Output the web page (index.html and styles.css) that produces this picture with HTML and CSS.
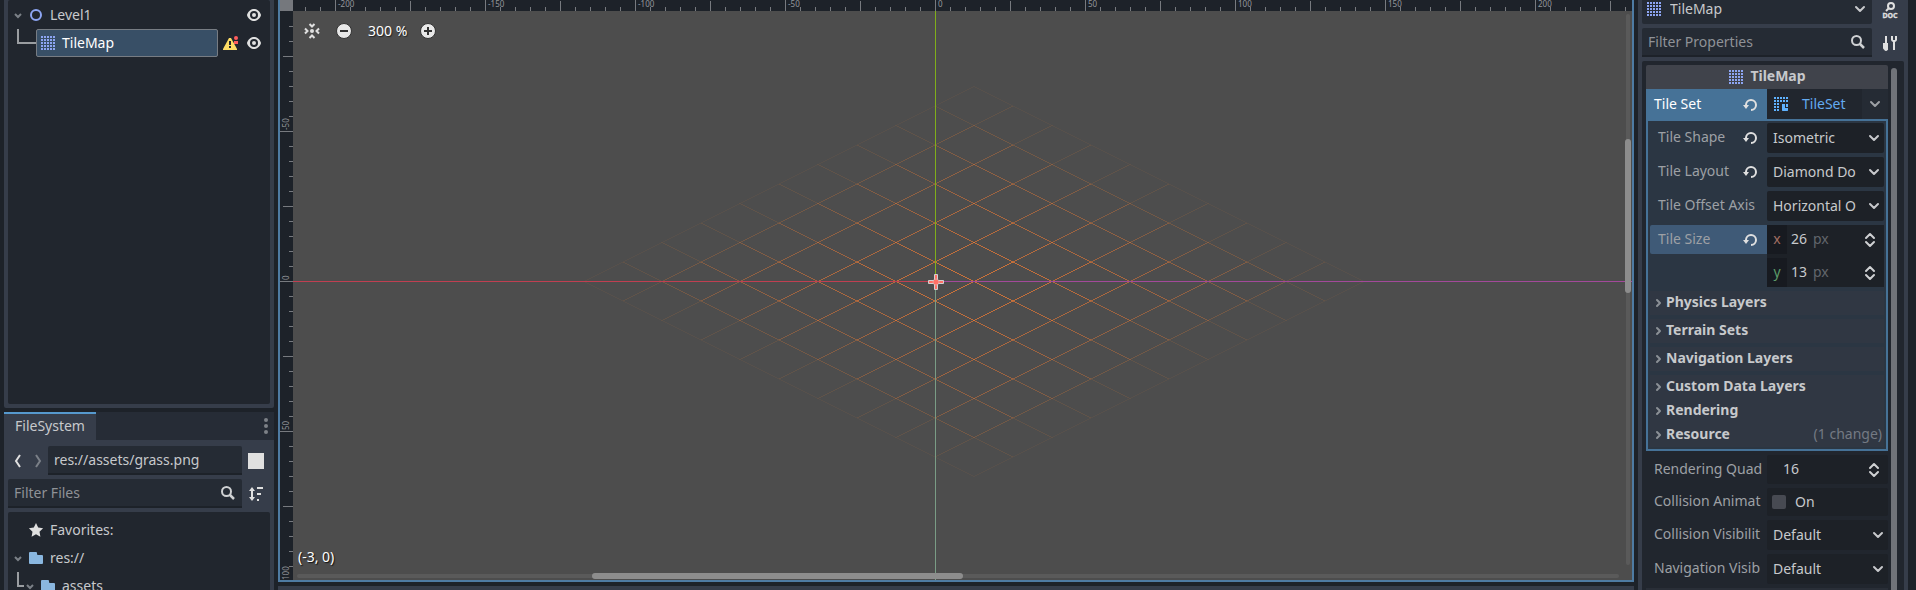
FILE: index.html
```html
<!DOCTYPE html>
<html lang="en">
<head>
<meta charset="utf-8">
<title>Level1 - TileMap</title>
<link rel="stylesheet" href="styles.css">
</head>
<body>
<svg class="defs" aria-hidden="true">
  <symbol id="i-eye" viewBox="0 0 16 16"><path fill="#e0e0e0" d="M8 2C5.443 2 2.209 3.948 1.045 7.705a1 1 0 0 0-.006.572C2.163 12.211 5.5 14 8 14s5.836-1.789 6.961-5.725a1 1 0 0 0 0-.55C13.861 3.935 10.557 2 8 2zm0 2a4 4 0 0 1 0 8 4 4 0 0 1 0-8zm0 2a2 2 0 0 0 0 4 2 2 0 0 0 0-4z"/></symbol>
  <symbol id="i-search" viewBox="0 0 16 16"><g fill="none" stroke="#cfd1d3" stroke-width="2"><circle cx="6.500" cy="6.500" r="4.500"/><path stroke-width="2.500" d="M9.500 9.500l4.500 4.500"/></g></symbol>
  <symbol id="i-tilemap" viewBox="0 0 16 16"><path fill="none" stroke="#8da5f3" stroke-width="2" stroke-dasharray="2 1" d="M1 2h14M1 5h14M1 8h14M1 11h14M1 14h14"/></symbol>
  <symbol id="i-tileset" viewBox="0 0 16 16"><path fill="none" stroke="#5fb2ff" stroke-width="2" stroke-dasharray="2 1" d="M1 2h14M1 5h14M1 8h5M1 11h5M1 14h5"/><path fill="#5fb2ff" d="M9 8h3v4h3v2.500l-.5.5H9.500L9 14.500z M13 8h2v3h-2z"/></symbol>
  <symbol id="i-down" viewBox="0 0 16 16"><path fill="none" stroke="currentColor" stroke-width="2" stroke-linecap="round" stroke-linejoin="round" d="M4 6l4 4 4-4"/></symbol>
  <symbol id="i-revert" viewBox="0 0 16 16"><path fill="#e0e0e0" d="M9 2a6 6 0 0 0-6 6H1l3 4 3-4H5a4 4 0 1 1 4 4v2A6 6 0 0 0 9 2z"/></symbol>
  <symbol id="i-updown" viewBox="0 0 16 16"><path fill="none" stroke="#cfd1d3" stroke-width="2" stroke-linecap="round" stroke-linejoin="round" d="M4 6l4-4 4 4M4 10l4 4 4-4"/></symbol>
  <symbol id="i-folder" viewBox="0 0 16 16"><path fill="#8ab7e0" d="M2 2a1 1 0 0 0-1 1v10a1 1 0 0 0 1 1h12a1 1 0 0 0 1-1V6a1 1 0 0 0-1-1h-4a1 1 0 0 1-1-1V3a1 1 0 0 0-1-1z"/></symbol>
  <symbol id="i-right" viewBox="0 0 12 12"><path fill="none" stroke="#8b9096" stroke-width="2" stroke-linecap="round" stroke-linejoin="round" d="M5 3l3 3-3 3"/></symbol>
</svg>

<div class="editor">
  <div class="left">
    <section class="dock scene" aria-label="Scene">
      <div class="tree">
        <div class="item">
          <svg class="fold" viewBox="0 0 12 12"><path d="M3 5l3 3 3-3"/></svg>
          <svg class="icon" viewBox="0 0 16 16"><circle cx="8" cy="8" r="5" fill="none" stroke="#8da5f3" stroke-width="2"/></svg>
          <span class="name">Level1</span>
          <button class="flat" aria-label="Toggle Level1"><svg class="icon"><use href="#i-eye"/></svg></button>
        </div>
        <div class="item child">
          <span class="branch"></span>
          <div class="selected"><svg class="icon"><use href="#i-tilemap"/></svg><span>TileMap</span></div>
          <button class="flat" aria-label="Warnings"><svg class="icon" viewBox="0 0 16 16"><path fill="#ffdd65" d="M7 3h2l6 11v1H1v-1z"/><path fill="#21262e" d="M7 6h2v4H7zM7 11h2v2H7z"/><circle cx="14" cy="3" r="2" fill="#ff5d5d"/><path fill="#ff5d5d" d="M12 6h4v3h-4z"/></svg></button>
          <button class="flat" aria-label="Toggle TileMap"><svg class="icon"><use href="#i-eye"/></svg></button>
        </div>
      </div>
    </section>

    <section class="dock files" aria-label="FileSystem">
      <div class="tabs">
        <button class="tab">FileSystem</button>
        <button class="flat more" aria-label="Dock options"><svg class="icon" viewBox="0 0 16 16" fill="#7d8187"><circle cx="8" cy="2" r="2"/><circle cx="8" cy="8" r="2"/><circle cx="8" cy="14" r="2"/></svg></button>
      </div>
      <div class="files-body">
        <div class="bar">
          <button class="flat" aria-label="Back"><svg class="nav" viewBox="0 0 20 16"><path stroke="#e0e0e0" d="M12 2l-4 6 4 6"/></svg></button>
          <button class="flat" aria-label="Forward"><svg class="nav" viewBox="0 0 20 16"><path stroke="#7b8088" d="M8 2l4 6-4 6"/></svg></button>
          <input class="field path" aria-label="Path" value="res://assets/grass.png">
          <button class="flat side" aria-label="Split mode"><svg class="icon" viewBox="0 0 16 16"><path fill="#e0e0e0" d="M0 0h16v16H0z"/></svg></button>
        </div>
        <div class="bar">
          <label class="field search"><input aria-label="Filter Files" placeholder="Filter Files"><svg class="icon"><use href="#i-search"/></svg></label>
          <button class="flat side" aria-label="Sort files"><svg class="icon" viewBox="0 0 16 16"><path fill="#e0e0e0" d="M4 1l3 4H5v6h2l-3 4-3-4h2V5H1zM9 1h6v2H9zM9 7h4v2H9zM9 13h2v2H9z"/></svg></button>
        </div>
        <div class="tree">
          <div class="item"><span class="fold"></span><svg class="icon" viewBox="0 0 16 16"><path fill="#e0e0e0" d="M8 1l2.200 4.600 4.900.6-3.600 3.500.9 5L8 12.300l-4.400 2.400.9-5L.9 6.200l4.900-.6z"/></svg><span class="name">Favorites:</span></div>
          <div class="item"><svg class="fold" viewBox="0 0 12 12"><path d="M3 5l3 3 3-3"/></svg><svg class="icon"><use href="#i-folder"/></svg><span class="name">res://</span></div>
          <div class="item child"><span class="branch short"></span><svg class="fold" viewBox="0 0 12 12"><path d="M3 5l3 3 3-3"/></svg><svg class="icon"><use href="#i-folder"/></svg><span class="name">assets</span></div>
        </div>
      </div>
    </section>
  </div>

  <main class="center">
    <div class="viewport">
      <svg class="canvas" aria-label="2D viewport"></svg>
      <div class="zoom">
        <button class="flat" aria-label="Center view"><svg class="icon" viewBox="0 0 16 16"><circle cx="8" cy="8" r="2" fill="#e0e0e0"/><path fill="none" stroke="#e0e0e0" stroke-width="2" d="M5.500 1L8 3.500 10.500 1M5.500 15L8 12.500l2.500 2.500M1 5.500L3.500 8 1 10.500M15 5.500L12.500 8l2.500 2.500"/></svg></button>
        <button class="flat" aria-label="Zoom out"><svg class="icon" viewBox="0 0 16 16"><circle cx="8" cy="8" r="7.500" fill="#e8e8e8" stroke="#333"/><path fill="#333" d="M4 7h8v2H4z"/></svg></button>
        <button class="flat level">300 %</button>
        <button class="flat" aria-label="Zoom in"><svg class="icon" viewBox="0 0 16 16"><circle cx="8" cy="8" r="7.500" fill="#e8e8e8" stroke="#333"/><path fill="#333" d="M4 7h3V4h2v3h3v2H9v3H7V9H4z"/></svg></button>
      </div>
      <output class="coords">(-3, 0)</output>
      <div class="scroll-v"><div class="thumb"></div></div>
      <div class="scroll-h"><div class="thumb"></div></div>
    </div>
    <div class="bottom"></div>
  </main>

  <aside class="dock inspector" aria-label="Inspector">
    <div class="bar top">
      <div class="pick object"><svg class="icon"><use href="#i-tilemap"/></svg><select aria-label="Edited object"><option>TileMap</option></select><svg class="icon arrow"><use href="#i-down"/></svg></div>
      <button class="flat side" aria-label="Open documentation"><svg class="icon" viewBox="0 0 16 16"><circle cx="9" cy="4" r="3" fill="none" stroke="#e0e0e0" stroke-width="2"/><path stroke="#e0e0e0" stroke-width="2" d="M7 6L4 9"/><text class="doc" x="8" y="16" text-anchor="middle">DOC</text></svg></button>
    </div>
    <div class="bar">
      <label class="field search"><input aria-label="Filter Properties" placeholder="Filter Properties"><svg class="icon"><use href="#i-search"/></svg></label>
      <button class="flat side" aria-label="Manage properties"><svg class="icon" viewBox="0 0 16 16"><path fill="#e0e0e0" d="M3 1h2v7h1v5a2 2 0 0 1-4 1.500A2 2 0 0 1 1 13V8h2zM9 1v4a3 3 0 0 0 2 2v8h2V7a3 3 0 0 0 2-2V1h-2v4h-2V1z"/></svg></button>
    </div>
    <div class="props">
      <div class="list">
        <h2 class="category"><svg class="icon"><use href="#i-tilemap"/></svg><span>TileMap</span></h2>
        <div class="row resource">
          <span class="label">Tile Set</span>
          <button class="flat revert" aria-label="Revert Tile Set"><svg class="icon"><use href="#i-revert"/></svg></button>
          <div class="res"><button class="res-main"><svg class="icon"><use href="#i-tileset"/></svg><span>TileSet</span></button><button class="res-menu" aria-label="Tile Set menu"><svg class="icon"><use href="#i-down"/></svg></button></div>
        </div>
        <div class="sub">
          <div class="row"><label class="label" for="shape">Tile Shape</label><button class="flat revert" aria-label="Revert Tile Shape"><svg class="icon"><use href="#i-revert"/></svg></button><div class="pick"><select id="shape"><option>Isometric</option></select><svg class="icon arrow"><use href="#i-down"/></svg></div></div>
          <div class="row"><label class="label" for="layout">Tile Layout</label><button class="flat revert" aria-label="Revert Tile Layout"><svg class="icon"><use href="#i-revert"/></svg></button><div class="pick"><select id="layout"><option>Diamond Do</option></select><svg class="icon arrow"><use href="#i-down"/></svg></div></div>
          <div class="row"><label class="label" for="axis">Tile Offset Axis</label><div class="pick"><select id="axis"><option>Horizontal O</option></select><svg class="icon arrow"><use href="#i-down"/></svg></div></div>
          <div class="row size">
            <div class="size-name"><label class="label" for="sx">Tile Size</label><button class="flat revert" aria-label="Revert Tile Size"><svg class="icon"><use href="#i-revert"/></svg></button></div>
            <div class="vector">
              <div class="spin"><label class="axis x" for="sx">x</label><input id="sx" value="26"><span class="unit">px</span><svg class="icon"><use href="#i-updown"/></svg></div>
              <div class="spin"><label class="axis y" for="sy">y</label><input id="sy" value="13"><span class="unit">px</span><svg class="icon"><use href="#i-updown"/></svg></div>
            </div>
          </div>
          <div class="sections">
            <button class="section"><svg><use href="#i-right"/></svg>Physics Layers</button>
            <button class="section"><svg><use href="#i-right"/></svg>Terrain Sets</button>
            <button class="section"><svg><use href="#i-right"/></svg>Navigation Layers</button>
            <div class="joined">
              <button class="section"><svg><use href="#i-right"/></svg>Custom Data Layers</button>
              <button class="section"><svg><use href="#i-right"/></svg>Rendering</button>
              <button class="section"><svg><use href="#i-right"/></svg>Resource<span class="changes">(1 change)</span></button>
            </div>
          </div>
        </div>
        <div class="plain">
          <div class="row"><label class="label" for="quad">Rendering Quad</label><div class="spin"><input id="quad" class="wide" value="16"><svg class="icon"><use href="#i-updown"/></svg></div></div>
          <div class="row"><label class="label" for="anim">Collision Animat</label><div class="check"><input type="checkbox" id="anim"><label for="anim">On</label></div></div>
          <div class="row"><label class="label" for="cvis">Collision Visibilit</label><div class="pick"><select id="cvis"><option>Default</option></select><svg class="icon arrow"><use href="#i-down"/></svg></div></div>
          <div class="row"><label class="label" for="nvis">Navigation Visib</label><div class="pick"><select id="nvis"><option>Default</option></select><svg class="icon arrow"><use href="#i-down"/></svg></div></div>
          <div class="next"></div>
        </div>
      </div>
      <div class="rail"></div>
    </div>
  </aside>
</div>
<script src="canvas.js"></script>
</body>
</html>
```
FILE: styles.css
```css
* { box-sizing: border-box; }
body { margin: 0; background: #1d2229; color: #c7c9cc; font: 14px/20px "Noto Sans", sans-serif; overflow: hidden; }
button, input, select { font: inherit; color: inherit; margin: 0; padding: 0; border: 0; background: none; outline: 0; min-width: 0; }
h2 { margin: 0; }
.defs { position: absolute; width: 0; height: 0; }
.icon { width: 16px; height: 16px; flex: none; display: block; overflow: visible; }
.flat { display: grid; place-items: center; flex: none; white-space: nowrap; }

.editor { display: grid; grid-template: minmax(0, 1fr) / 270px minmax(0, 1fr) 270px; gap: 4px; height: 100vh; padding: 0 8px 0 4px; }
.left { display: grid; grid-template-rows: minmax(0, 408fr) minmax(0, 178fr); gap: 4px; }
.dock { background: #363d4a; overflow: hidden; display: flex; flex-direction: column; }
.scene { padding: 0 4px 4px; border-radius: 0 0 2px 2px; }
.tree { flex: 1; background: #21262e; border-radius: 2px; padding: 1px 8px 0 4px; }
.item { display: flex; align-items: center; height: 28px; }
.fold { width: 12px; height: 12px; flex: none; margin-right: 4px; fill: none; stroke: #7b8087; stroke-width: 2; }
.name { flex: 1; padding-left: 6px; white-space: nowrap; }
.branch { align-self: flex-start; width: 19px; height: 15px; margin-left: 5px; border: solid #9a9da1; border-width: 0 0 2px 2px; flex: none; }
.branch.short { width: 7px; }
.scene .child { gap: 8px; }
.selected { flex: 1; display: flex; align-items: center; gap: 6px; height: 28px; padding: 0 3px; margin: 0 -4px 0 -8px; background: #384f66; border: 1px solid #777c83; border-radius: 2px; color: #fff; }

.tabs { display: flex; justify-content: space-between; flex: none; height: 28px; background: #262c36; }
.tab { padding: 0 11px 2px; background: #363d4a; border-top: 2px solid #5699ce; }
.more { width: 16px; }
.files-body { flex: 1; display: flex; flex-direction: column; gap: 4px; padding: 6px 4px 0; min-height: 0; }
.files .tree { padding-top: 4px; }
.bar { display: flex; align-items: center; flex: none; gap: 0; }
.side { width: 28px; height: 28px; }
.nav { width: 20px; height: 16px; fill: none; stroke-width: 2; }
.field { flex: 1; height: 29px; padding: 0 6px; background: #252b34; border-bottom: 2px solid #1d2229; border-radius: 2px 2px 0 0; }
.search { display: flex; align-items: center; }
.search input { flex: 1; width: 0; }
::placeholder { color: #8f9297; opacity: 1; }

.center { display: grid; grid-template-rows: minmax(0, 1fr) 4px; gap: 4px; }
.viewport { position: relative; border: solid #4e7ba3; border-width: 0 2px 2px; background: #4d4d4d; overflow: hidden; }
.bottom { background: #363d4a; }
.canvas { position: absolute; inset: 0; width: 100%; height: 100%; }
.num { font-size: 8px; fill: #94979b; }
.zoom { position: absolute; left: 24px; top: 23px; display: flex; align-items: center; height: 16px; gap: 16px; }
.level { color: #fff; text-shadow: 1px 1px 1px #222; width: 36px; }
.coords { position: absolute; left: 18px; bottom: 13px; color: #fff; text-shadow: 1px 1px 1px #111; }
.scroll-v, .scroll-h { position: absolute; background: #5a5a5a; border-radius: 2px; }
.scroll-v { right: 2px; top: 14px; bottom: 15px; width: 4px; }
.scroll-h { left: 17px; right: 13px; bottom: 2px; height: 4px; }
.thumb { position: absolute; background: #8d8d8d; border-radius: 3px; }
.scroll-v .thumb { left: -1px; right: -1px; top: 22.7%; height: 28%; }
.scroll-h .thumb { top: -1px; bottom: -1px; left: 22.3%; width: 28.1%; }

.inspector { padding: 0 4px; gap: 4px; }
.inspector .bar { gap: 4px; }
.top { height: 24px; align-items: flex-end; overflow: hidden; }
.pick { display: grid; grid-template-columns: minmax(0, 1fr) 18px; align-items: center; height: 30px; background: #1d2127; border-radius: 2px; }
.pick select { grid-area: 1 / 1 / 2 / 3; appearance: none; height: 100%; padding: 0 20px 0 6px; }
.arrow { grid-area: 1 / 2; pointer-events: none; }
.object { flex: 1; grid-template-columns: 24px minmax(0, 1fr) 20px; background: #252b34; }
.object > .icon:first-child { margin-left: 4px; }
.object select { grid-area: 1 / 2 / 2 / 4; padding-left: 4px; }
.object .arrow { grid-area: 1 / 3; }
.doc { font: bold 7px "Noto Sans", sans-serif; fill: #e0e0e0; stroke: #e0e0e0; stroke-width: 0.3px; }
.props { flex: 1; display: flex; gap: 3px; min-height: 0; padding: 4px 7px 0 4px; background: #21262e; overflow: hidden; border-radius: 2px 2px 0 0; }
.list { flex: 1; min-width: 0; }
.rail { width: 6px; flex: none; margin-top: 3px; background: #707379; border-radius: 3px 3px 0 0; }
.category { display: flex; align-items: center; justify-content: center; gap: 6px; height: 24px; background: #40434b; font-size: 14px; border-radius: 2px 2px 0 0; }
.category span { padding-bottom: 2px; }
.row { display: grid; grid-template-columns: minmax(0, 1fr) 34px 121px; align-items: center; }
.label { grid-column: 1 / 3; grid-row: 1; padding: 0 0 2px 8px; color: #9da0a5; white-space: nowrap; }
.revert { grid-column: 2; grid-row: 1; }
.row > :last-child { grid-column: 3; }
.resource { height: 32px; background: #467297; box-shadow: inset 0 -2px #467297; }
.resource .label { color: #fff; }
.res { align-self: start; height: 30px; display: flex; background: #21262e; color: #63aaf0; }
.res-main { flex: 1; display: flex; align-items: center; gap: 13px; padding-left: 6px; }
.res-menu { width: 26px; display: grid; place-items: center; background: #252b34; color: #9da0a5; }
.sub { border: solid #467297; border-width: 0 2px 2px; padding: 2px; background: #2b3643; }
.sub .row { grid-template-columns: minmax(0, 1fr) 34px 117px; margin-bottom: 4px; }
.sub .size { align-items: start; }
.size-name { grid-column: 1 / 3; display: grid; grid-template-columns: minmax(0, 1fr) 34px; align-items: center; height: 29px; background: #3f5a77; border-radius: 2px 0 0 2px; }
.vector { background: #1d2127; display: grid; gap: 4px; border-radius: 2px; }
.spin { display: flex; align-items: center; height: 29px; padding-right: 6px; background: #1d2127; }
.spin .icon { margin-left: auto; }
.axis { width: 20px; line-height: 27px; padding-bottom: 2px; text-align: center; background: #171a20; }
.x { color: #a26e62; }
.y { color: #5c9a68; }
.spin input { width: 22px; margin-left: 4px; padding-bottom: 2px; }
.spin .wide { width: 40px; margin-left: 16px; }
.unit { color: #62666c; padding-bottom: 2px; }
.sections { display: grid; gap: 4px; }
.section { display: flex; align-items: center; width: 100%; height: 24px; padding: 0 2px 2px; background: #303743; font-weight: bold; white-space: nowrap; }
.section svg { width: 12px; height: 12px; margin: 2px 2px 0 0; flex: none; }
.changes { margin-left: auto; font-weight: normal; color: #747a83; }
.plain { display: grid; gap: 4px; padding-top: 4px; }
.plain .row > :last-child { border-radius: 2px; }
.check { display: flex; align-items: center; gap: 9px; height: 28px; padding-left: 5px; background: #1d2127; }
.check input { appearance: none; width: 14px; height: 14px; background: #474a52; border-radius: 2px; }
.next { height: 24px; background: #292e37; }
```
FILE: canvas.js
```js
const NS = 'http://www.w3.org/2000/svg';
const canvas = document.querySelector('.canvas');
const RULER_W = 13, RULER_H = 11;
const UNIT = 3;
const HALF_W = 13 * UNIT, HALF_H = 6.5 * UNIT;
const FADE = 5;

function add(tag, attrs, text) {
  const el = document.createElementNS(NS, tag);
  for (const key in attrs) el.setAttribute(key, attrs[key]);
  if (text !== undefined) el.textContent = text;
  canvas.append(el);
}
function rect(x, y, width, height, fill) {
  add('rect', { x, y, width, height, fill });
}

function draw() {
  canvas.replaceChildren();
  const w = canvas.clientWidth, h = canvas.clientHeight;
  const ox = Math.round(w * 0.4845), oy = Math.round(h * 0.4845);

  // Tile outlines, fading towards the border of the drawn area.
  const last = 2 * FADE - 1;
  for (let i = 0; i <= last; i++) {
    for (let j = 0; j <= last; j++) {
      const near = Math.min(i, last - i, j, last - j) / FADE;
      const x = ox + (i + j - last) * HALF_W;
      const y = oy + 0.5 + (i - j) * HALF_H;
      add('path', {
        d: `M${x} ${y}l${HALF_W}-${HALF_H} ${HALF_W} ${HALF_H}-${HALF_W} ${HALF_H}z`,
        fill: 'none', stroke: '#ff8033', 'shape-rendering': 'crispEdges',
        'stroke-opacity': (near + 0.12) * 0.5
      });
    }
  }

  rect(0, oy, ox, 1, '#c03f51');
  rect(ox, oy, w - ox, 1, '#a3499a');
  rect(ox, 0, 1, oy, '#80ae1b');
  rect(ox, oy, 1, h - oy, '#7a9c85');

  const cx = ox + 1, cy = oy + 1;
  add('path', { d: `M${cx - 1.5} ${cy - 7.5}h3v6h6v3h-6v6h-3v-6h-6v-3h6z`, fill: '#ff7066', stroke: '#d0d0d0' });
  add('circle', { cx, cy, r: 3, fill: '#ff7066', stroke: '#d0d0d0', 'stroke-width': 0.5 });

  rect(0, 0, w, RULER_H, '#1d2229');
  rect(0, 0, RULER_W, h, '#1d2229');
  for (let k = -60; k <= 60; k++) {
    const major = k % 10 === 0, mid = k % 5 === 0;
    const len = mid ? 10 : 4;
    const x = ox + k * 5 * UNIT, y = oy + k * 5 * UNIT;
    if (x > RULER_W && x < w) {
      rect(x, major ? 0 : RULER_H - len, 1, major ? RULER_H : len, '#777a7f');
      if (major) add('text', { x: x + 3, y: 7, class: 'num' }, k * 5);
    }
    if (y > RULER_H && y < h + 10) {
      rect(major ? 0 : RULER_W - len, y, major ? RULER_W : len, 1, '#777a7f');
      if (major) add('text', { transform: `translate(9 ${y - 1}) rotate(-90)`, class: 'num' }, k * 5);
    }
  }
  rect(0, 0, RULER_W, RULER_H, '#75787d');
}

draw();
addEventListener('resize', draw);
```
